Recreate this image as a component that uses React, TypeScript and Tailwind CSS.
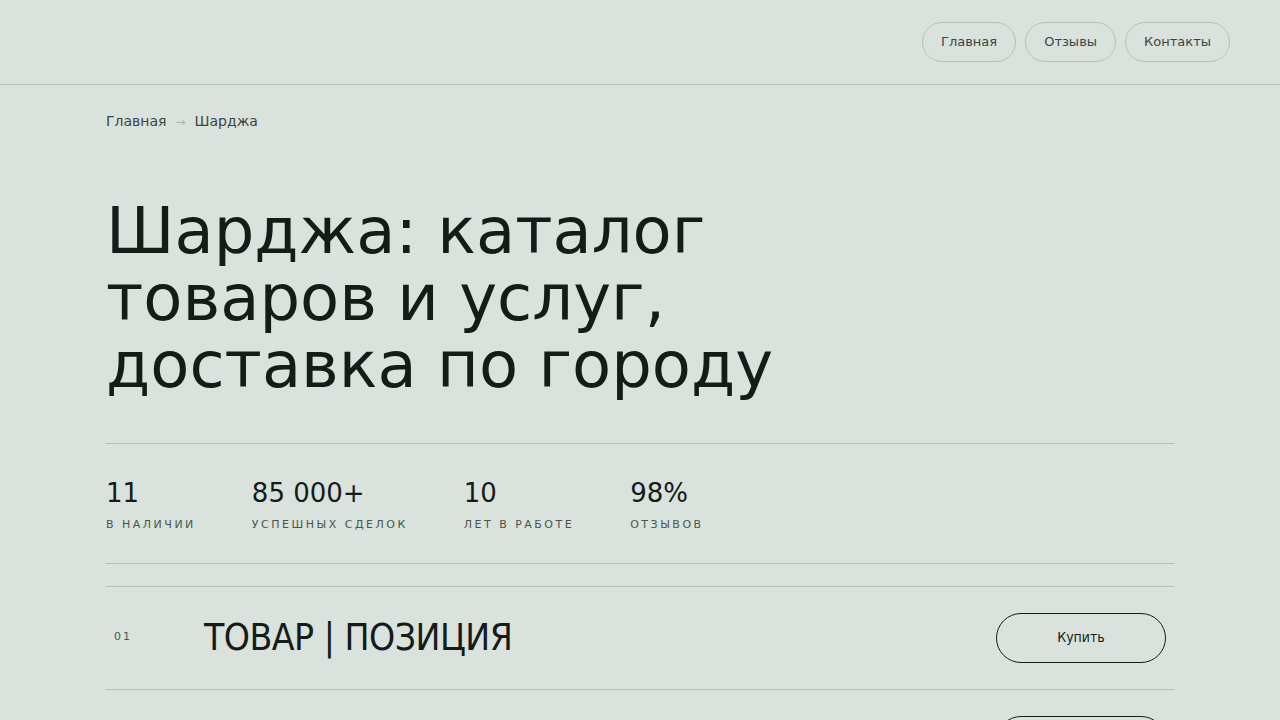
export default function App() {
  const stats = [
    { n: "11", l: "В НАЛИЧИИ" },
    { n: "85 000+", l: "УСПЕШНЫХ СДЕЛОК" },
    { n: "10", l: "ЛЕТ В РАБОТЕ" },
    { n: "98%", l: "ОТЗЫВОВ" },
  ];
  const items = ["ТОВАР | ПОЗИЦИЯ", "ТОВАР | ПОЗИЦИЯ"];
  return (
    <div
      className="min-h-[720px] bg-[#d9e2dc] text-[#151b17]"
      style={{ fontFamily: '"DejaVu Sans", "Noto Sans", sans-serif' }}
    >
      <header className="h-[85px] border-b border-[#b7c1ba] flex items-center justify-end pr-[50px]">
        <nav className="flex gap-[9px] text-[13px] text-[#3c4640]">
          {["Главная", "Отзывы", "Контакты"].map((t) => (
            <a
              key={t}
              className="h-[40px] px-[18px] flex items-center rounded-full border border-[#b7c1ba]"
            >
              {t}
            </a>
          ))}
        </nav>
      </header>
      <main className="w-[1068px] mx-auto">
        <div className="pt-[26px] flex items-center gap-[9px] text-[14px] text-[#3c4640]">
          <span>Главная</span>
          <span className="text-[#a9b3ac] text-[12px]">→</span>
          <span>Шарджа</span>
        </div>
        <h1 className="mt-[66px] text-[64px] leading-[67px] font-normal text-[#151b17]">
          Шарджа: каталог
          <br />
          товаров и услуг,
          <br />
          доставка по городу
        </h1>
        <div className="mt-[44px] border-t border-[#b7c1ba] pt-[33px] pb-[29px] flex gap-[56px] border-b">
          {stats.map((s) => (
            <div key={s.l} className="flex flex-col">
              <span className="text-[26px] leading-[32px]">{s.n}</span>
              <span className="mt-[8px] text-[11px] tracking-[2.5px] text-[#4b554e]">{s.l}</span>
            </div>
          ))}
        </div>
        <div className="mt-[22px]">
          {items.map((t, i) => (
            <div
              key={i}
              className="h-[103px] border-t border-[#b7c1ba] flex items-center"
            >
              <span className="w-[98px] pl-[8px] text-[11px] tracking-[2px] text-[#4b554e]">
                {String(i + 1).padStart(2, "0")}
              </span>
              <span
                className="flex-1 text-[37px] tracking-[-0.5px]"
                style={{ fontStretch: "condensed", fontFamily: '"DejaVu Sans Condensed", "DejaVu Sans", sans-serif' }}
              >
                {t}
              </span>
              <button
                className="mr-[8px] w-[170px] h-[50px] rounded-full border border-[#151b17] text-[14px]"
                style={{ fontFamily: '"DejaVu Sans Condensed", "DejaVu Sans", sans-serif' }}
              >
                Купить
              </button>
            </div>
          ))}
        </div>
      </main>
    </div>
  );
}
